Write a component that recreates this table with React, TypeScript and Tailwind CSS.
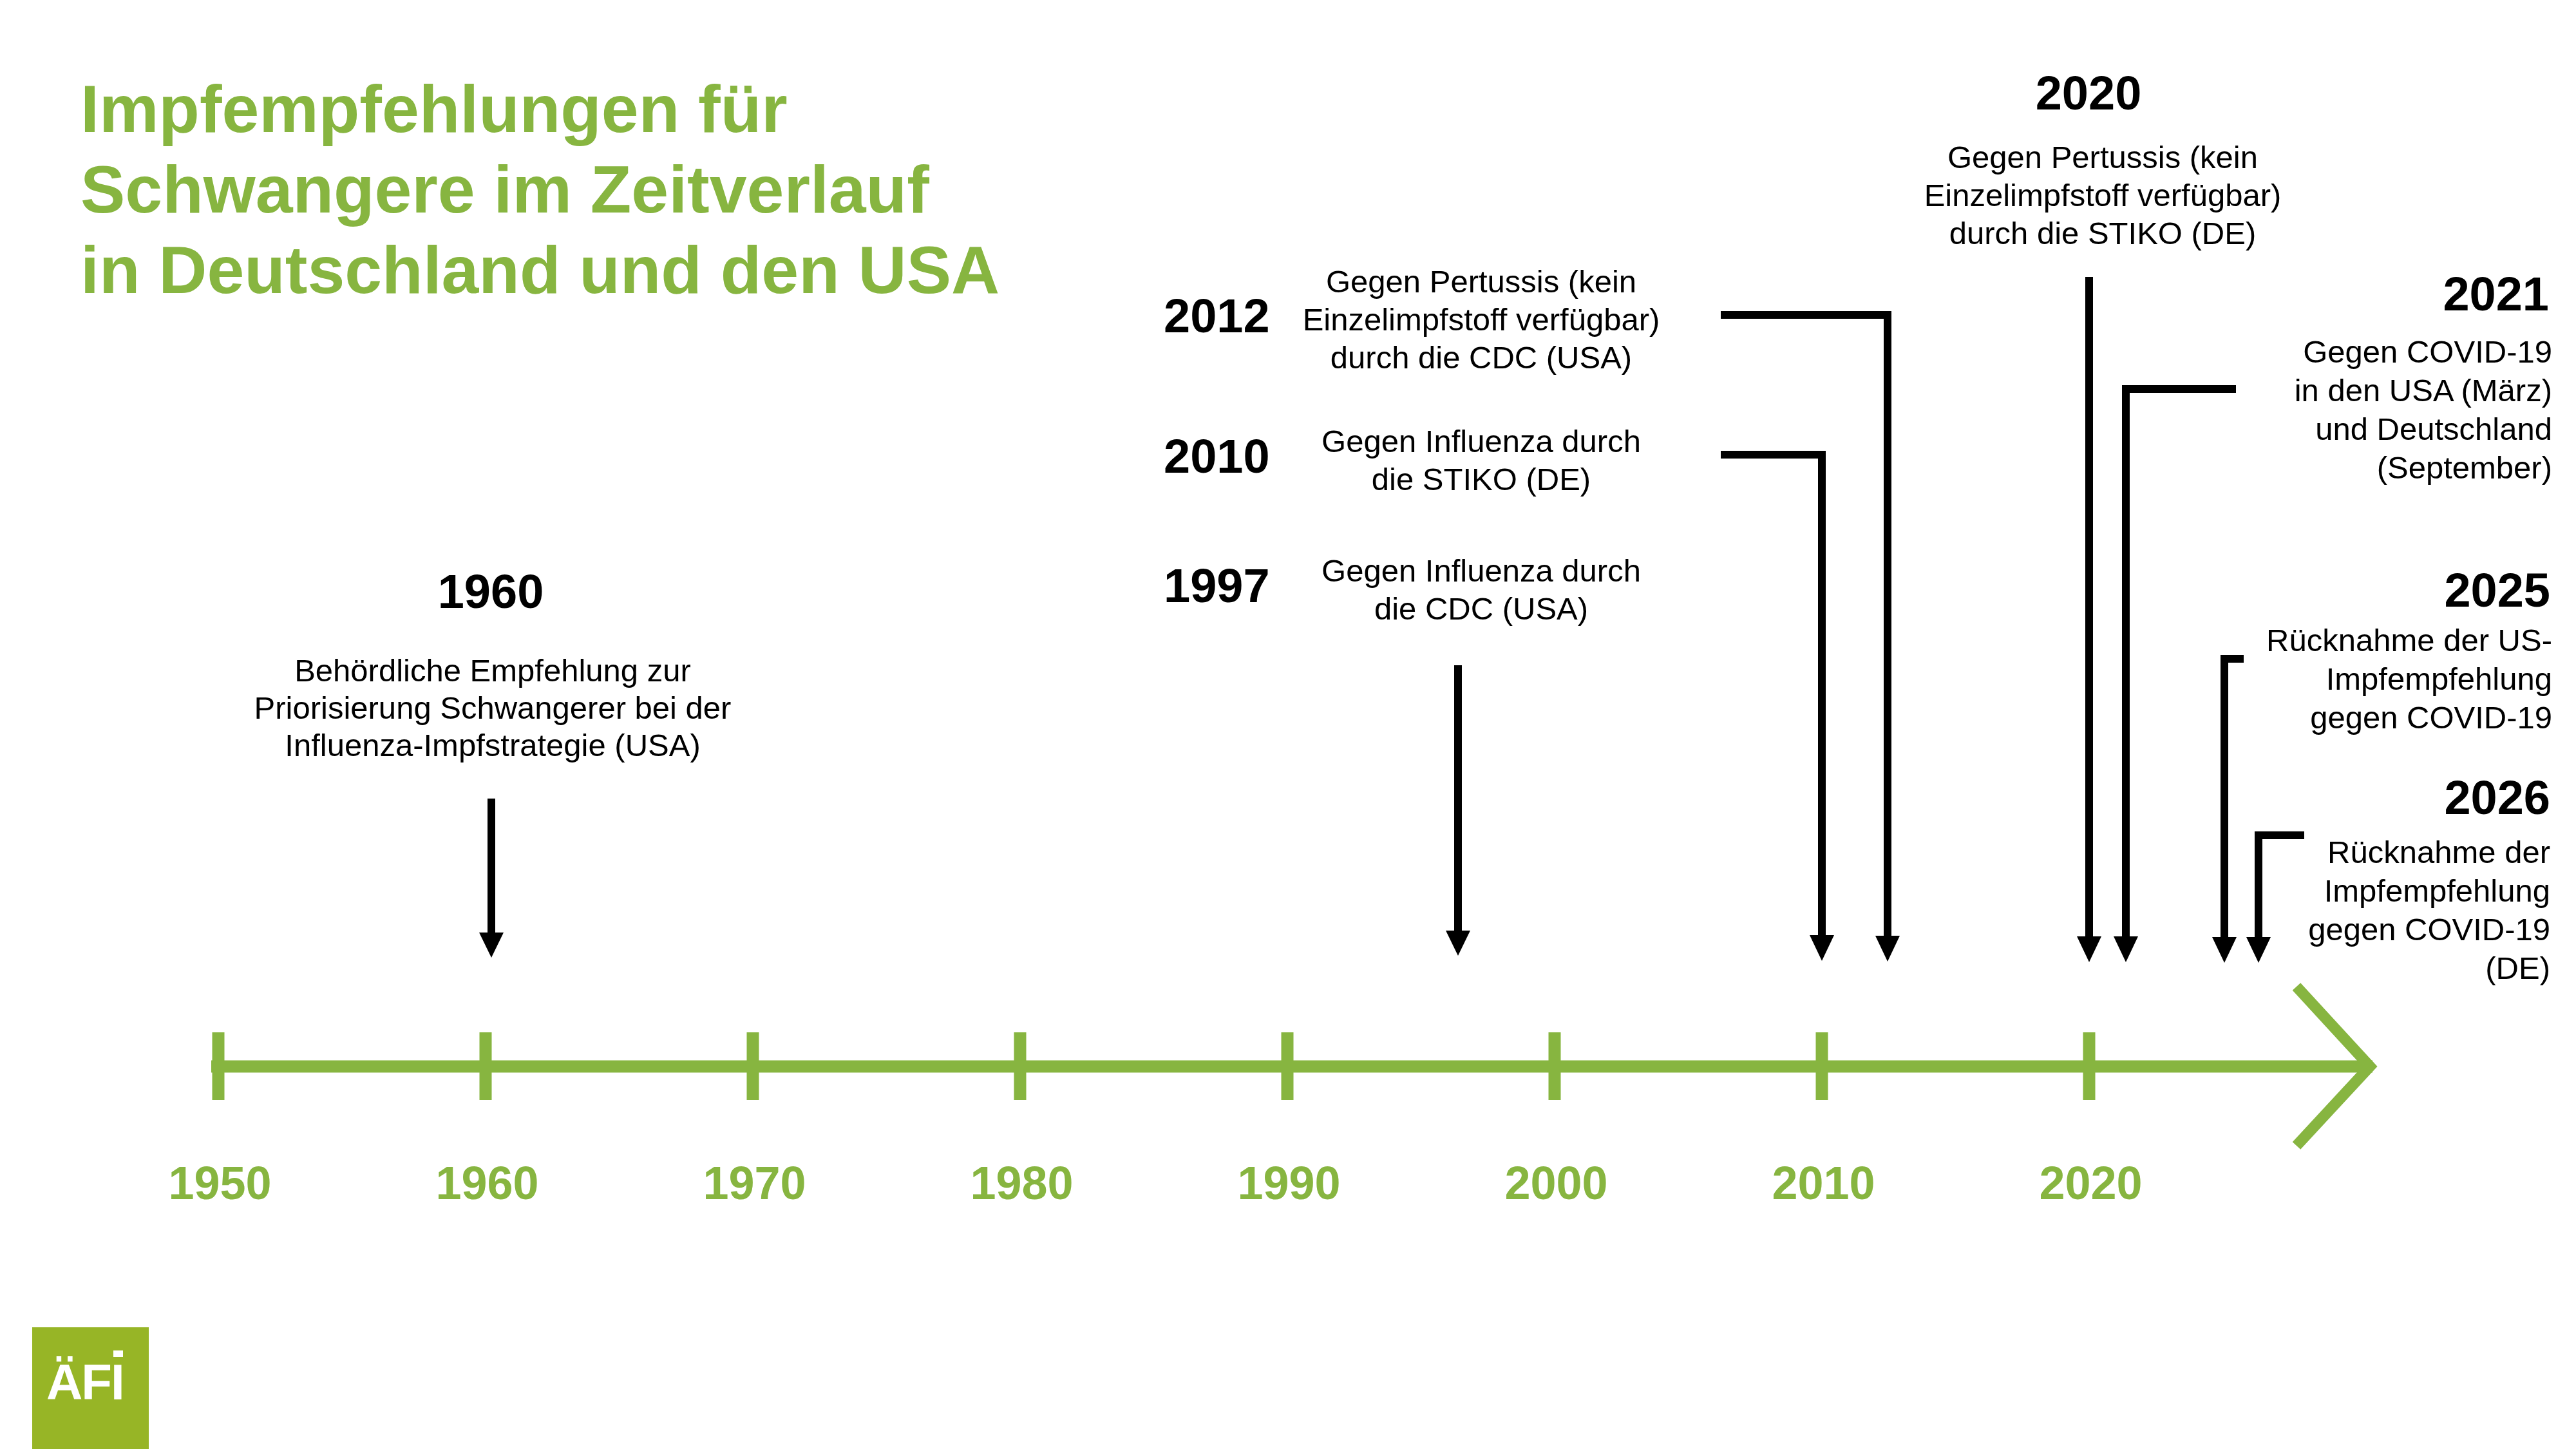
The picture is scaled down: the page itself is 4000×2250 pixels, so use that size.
export default function App() {
  const ticks = [339, 754, 1169, 1584, 1999, 2414, 2829, 3244]
  const labels = ['1950', '1960', '1970', '1980', '1990', '2000', '2010', '2020']

  return (
    <div className="relative w-[4000px] h-[2250px] overflow-hidden bg-white font-['Liberation_Sans',Arial,sans-serif] text-black">
      {/* Title */}
      <div className="pl-[125px] pt-[107px]">
        <h1 className="text-[104px] leading-[125px] font-bold text-[#87b540]">
          <div>Impfempfehlungen für</div>
          <div>Schwangere im Zeitverlauf</div>
          <div>in Deutschland und den USA</div>
        </h1>
      </div>

      {/* Axis, ticks, connectors */}
      <svg className="absolute left-0 top-0 pointer-events-none" width="4000" height="2250" viewBox="0 0 4000 2250">
        <line x1="328" y1="1656" x2="3684" y2="1656" stroke="#87b540" strokeWidth="19" />
        {ticks.map(x => (
          <line key={x} x1={x} y1="1603" x2={x} y2="1708" stroke="#87b540" strokeWidth="19" />
        ))}
        <polyline points="3566,1532 3680,1656 3566,1779" fill="none" stroke="#87b540" strokeWidth="17" strokeLinejoin="miter" />

        <g fill="none" stroke="#000" strokeWidth="12" strokeLinejoin="miter">
          <path d="M763 1240 V1450" />
          <path d="M2264 1033 V1448" />
          <path d="M2672 706 H2829 V1454" />
          <path d="M2672 489 H2931 V1455" />
          <path d="M3244 430 V1456" />
          <path d="M3472 604 H3301 V1456" />
          <path d="M3484 1023 H3454 V1457" />
          <path d="M3578 1297 H3507 V1457" />
        </g>
        <g fill="#000">
          <polygon points="744,1448 782,1448 763,1487" />
          <polygon points="2245,1445 2283,1445 2264,1484" />
          <polygon points="2810,1452 2848,1452 2829,1492" />
          <polygon points="2912,1453 2950,1453 2931,1493" />
          <polygon points="3225,1454 3263,1454 3244,1494" />
          <polygon points="3282,1454 3320,1454 3301,1494" />
          <polygon points="3435,1455 3473,1455 3454,1495" />
          <polygon points="3488,1455 3526,1455 3507,1495" />
        </g>
      </svg>

      {/* Year labels under the axis */}
      <div className="absolute left-[134px] top-[1801px] grid grid-cols-[repeat(8,415px)]">
        {labels.map(l => (
          <span key={l} className="text-center text-[72px] leading-none font-bold text-[#87b540]">{l}</span>
        ))}
      </div>

      {/* 1960 */}
      <div className="absolute left-[365px] top-[882px] w-[800px] flex flex-col items-center">
        <div className="mr-[6px] text-[74px] leading-none font-bold">1960</div>
        <div className="mt-[56px] text-center text-[49px] leading-[58px] whitespace-nowrap">
          <div>Behördliche Empfehlung zur</div>
          <div>Priorisierung Schwangerer bei der</div>
          <div>Influenza-Impfstrategie (USA)</div>
        </div>
      </div>

      {/* 2012 / 2010 / 1997 */}
      <div className="absolute left-[1807px] top-[408px] flex flex-col">
        <div className="flex items-center">
          <div className="w-[193px] mb-[12px] text-[74px] leading-none font-bold">2012</div>
          <div className="w-[600px] text-center text-[49px] leading-[59px] whitespace-nowrap">
            <div>Gegen Pertussis (kein</div>
            <div>Einzelimpfstoff verfügbar)</div>
            <div>durch die CDC (USA)</div>
          </div>
        </div>
        <div className="mt-[71px] flex items-center">
          <div className="w-[193px] mb-[12px] text-[74px] leading-none font-bold">2010</div>
          <div className="w-[600px] text-center text-[49px] leading-[59px] whitespace-nowrap">
            <div>Gegen Influenza durch</div>
            <div>die STIKO (DE)</div>
          </div>
        </div>
        <div className="mt-[83px] flex items-center">
          <div className="w-[193px] mb-[12px] text-[74px] leading-none font-bold">1997</div>
          <div className="w-[600px] text-center text-[49px] leading-[59px] whitespace-nowrap">
            <div>Gegen Influenza durch</div>
            <div>die CDC (USA)</div>
          </div>
        </div>
      </div>

      {/* 2020 */}
      <div className="absolute left-[2865px] top-[108px] w-[800px] flex flex-col items-center">
        <div className="mr-[44px] text-[74px] leading-none font-bold">2020</div>
        <div className="mt-[33px] text-center text-[49px] leading-[59px] whitespace-nowrap">
          <div>Gegen Pertussis (kein</div>
          <div>Einzelimpfstoff verfügbar)</div>
          <div>durch die STIKO (DE)</div>
        </div>
      </div>

      {/* 2021 / 2025 / 2026 */}
      <div className="absolute right-[37px] top-[420px] flex flex-col items-end text-right whitespace-nowrap">
        <div className="mr-[5px] text-[74px] leading-none font-bold">2021</div>
        <div className="mt-[22px] text-[49px] leading-[60px]">
          <div>Gegen COVID-19</div>
          <div>in den USA (März)</div>
          <div>und Deutschland</div>
          <div>(September)</div>
        </div>
        <div className="mt-[124px] mr-[3px] text-[74px] leading-none font-bold">2025</div>
        <div className="mt-[10px] text-[49px] leading-[60px]">
          <div>Rücknahme der US-</div>
          <div>Impfempfehlung</div>
          <div>gegen COVID-19</div>
        </div>
        <div className="mt-[58px] mr-[3px] text-[74px] leading-none font-bold">2026</div>
        <div className="mt-[17px] mr-[3px] text-[49px] leading-[60px]">
          <div>Rücknahme der</div>
          <div>Impfempfehlung</div>
          <div>gegen COVID-19</div>
          <div>(DE)</div>
        </div>
      </div>

      {/* Logo */}
      <div className="absolute left-[50px] bottom-0 w-[181px] h-[189px] bg-[#97b526] pl-[22px] pt-[46px]">
        <div className="flex text-[78px] leading-none font-bold tracking-[-2px] text-white">
          <span>ÄF</span>
          <span className="relative">
            I
            <span className="absolute left-[4px] top-[-10px] w-[15px] h-[10px] bg-white" />
          </span>
        </div>
      </div>
    </div>
  )
}
